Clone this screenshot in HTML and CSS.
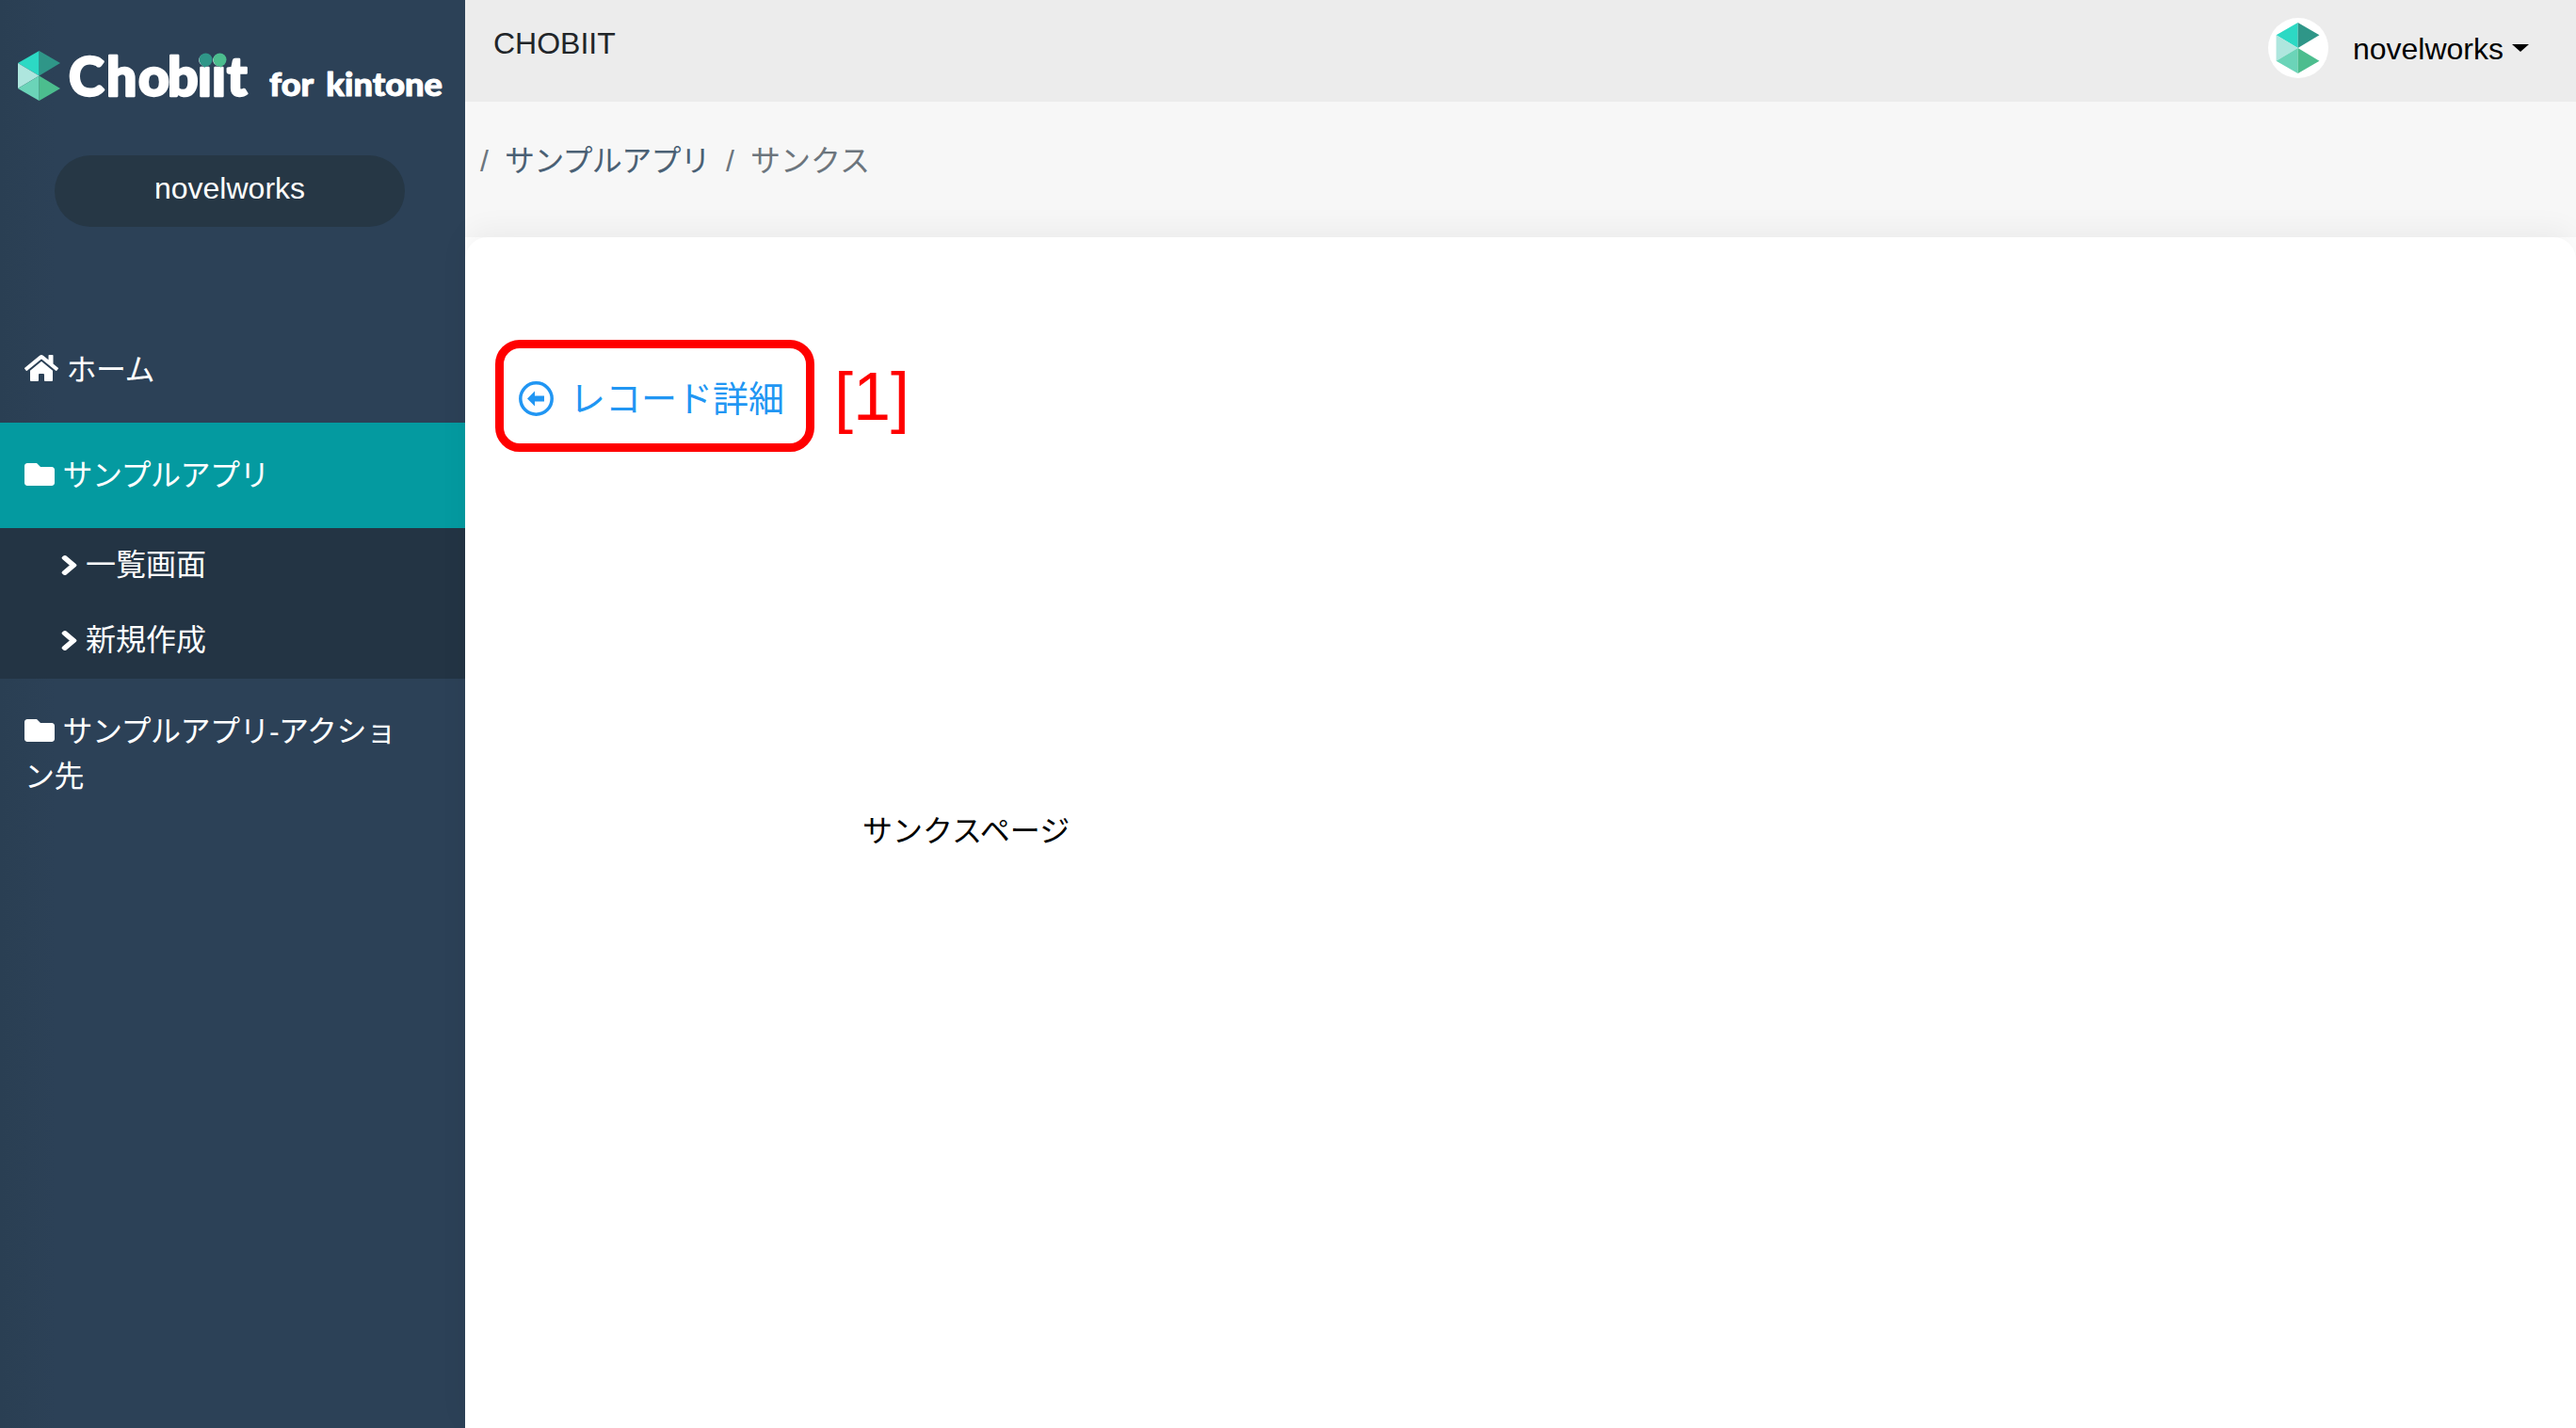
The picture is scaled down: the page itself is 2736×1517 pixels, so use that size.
FILE: index.html
```html
<!DOCTYPE html>
<html lang="ja">
<head>
<meta charset="utf-8">
<title>CHOBIIT</title>
<link rel="stylesheet" href="styles.css">
</head>
<body>
<div class="app">
  <aside class="sidebar">
    <svg class="logo" viewBox="0 0 494 165" width="494" height="165">
      <polygon points="19,67 41.6,54 41.6,80.5" fill="#2cd9c4"/>
      <polygon points="41.6,54 64,67 41.6,80.5" fill="#2f9688"/>
      <polygon points="19,67 41.6,80.5 19,94" fill="#aee6de"/>
      <polygon points="19,94 41.6,80.5 41.6,107" fill="#6bd4b8"/>
      <polygon points="41.6,80.5 64,94 41.6,107" fill="#4cbd8e"/>
      <text class="logo-main" x="73 113 147 178 210 225 241" y="102">Chobiit</text>
      <text class="logo-sub" x="286" y="102" textLength="184" lengthAdjust="spacingAndGlyphs">for kintone</text>
      <circle cx="218.500" cy="63.500" r="7" fill="#2f9688"/>
      <path d="M215 68l2 4 3-3z" fill="#2f9688"/>
      <circle cx="233.500" cy="63.500" r="7" fill="#4cbd8e"/>
      <path d="M232 69l3 3 1-4z" fill="#4cbd8e"/>
    </svg>
    <div class="tenant">novelworks</div>
    <nav class="nav">
      <a class="nav-item"><svg class="ic-home" viewBox="0 0 576 512"><path d="M280.37 148.26L96 300.11V464a16 16 0 0 0 16 16l112.06-.29a16 16 0 0 0 15.92-16V368a16 16 0 0 1 16-16h64a16 16 0 0 1 16 16v95.64a16 16 0 0 0 16 16.05L464 480a16 16 0 0 0 16-16V300L295.67 148.26a12.19 12.19 0 0 0-15.3 0zM571.6 251.47L488 182.56V44.05a12 12 0 0 0-12-12h-56a12 12 0 0 0-12 12v72.61L318.47 43a48 48 0 0 0-61 0L4.34 251.47a12 12 0 0 0-1.6 16.9l25.5 31A12 12 0 0 0 45.15 301l235.22-193.74a12.19 12.19 0 0 1 15.3 0L530.9 301a12 12 0 0 0 16.9-1.6l25.5-31a12 12 0 0 0-1.7-16.93z"/></svg> ホーム</a>
      <a class="nav-item active"><svg class="ic-folder" viewBox="0 0 512 512"><path d="M464 128H272l-64-64H48C21.49 64 0 85.49 0 112v288c0 26.51 21.49 48 48 48h416c26.51 0 48-21.49 48-48V176c0-26.51-21.49-48-48-48z"/></svg> サンプルアプリ</a>
      <div class="subnav">
        <a class="sub-item"><svg class="ic-chev" viewBox="0 0 320 512" preserveAspectRatio="none"><path d="M285.476 272.971L91.132 467.314c-9.373 9.373-24.569 9.373-33.941 0l-22.667-22.667c-9.357-9.357-9.375-24.522-.04-33.901L188.505 256 34.484 101.255c-9.335-9.379-9.317-24.544.04-33.901l22.667-22.667c9.373-9.373 24.569-9.373 33.941 0L285.475 239.03c9.373 9.372 9.373 24.568.001 33.941z"/></svg>一覧画面</a>
        <a class="sub-item"><svg class="ic-chev" viewBox="0 0 320 512" preserveAspectRatio="none"><path d="M285.476 272.971L91.132 467.314c-9.373 9.373-24.569 9.373-33.941 0l-22.667-22.667c-9.357-9.357-9.375-24.522-.04-33.901L188.505 256 34.484 101.255c-9.335-9.379-9.317-24.544.04-33.901l22.667-22.667c9.373-9.373 24.569-9.373 33.941 0L285.475 239.03c9.373 9.372 9.373 24.568.001 33.941z"/></svg>新規作成</a>
      </div>
      <a class="nav-item"><svg class="ic-folder" viewBox="0 0 512 512"><path d="M464 128H272l-64-64H48C21.49 64 0 85.49 0 112v288c0 26.51 21.49 48 48 48h416c26.51 0 48-21.49 48-48V176c0-26.51-21.49-48-48-48z"/></svg> サンプルアプリ-アクション先</a>
    </nav>
  </aside>
  <div class="content">
    <header class="topbar">
      <div class="brand">CHOBIIT</div>
      <div class="user">
        <span class="avatar">
          <svg viewBox="0 0 45 53" width="47" height="54">
            <polygon points="0,13 22.600,0 22.600,26.500" fill="#2cd9c4"/>
            <polygon points="22.600,0 45,13 22.600,26.500" fill="#2f9688"/>
            <polygon points="0,13 22.600,26.500 0,40" fill="#aee6de"/>
            <polygon points="0,40 22.600,26.500 22.600,53" fill="#6bd4b8"/>
            <polygon points="22.600,26.500 45,40 22.600,53" fill="#4cbd8e"/>
          </svg>
        </span>
        <span class="user-name">novelworks</span>
        <span class="caret"></span>
      </div>
    </header>
    <div class="crumbs">
      <span class="sep">/</span>
      <a class="crumb-link">サンプルアプリ</a>
      <span class="sep">/</span>
      <span class="crumb-current">サンクス</span>
    </div>
    <main class="card">
      <div class="back-row">
        <div class="callout">
          <a class="back-link">
            <svg class="ic-back" viewBox="0 0 37 37"><circle cx="18.500" cy="18.500" r="16.700" fill="none" stroke="#2196f3" stroke-width="3.500"/><path d="M9 18.500l8-8v5h10v6H17v5z" fill="#2196f3"/></svg>
            <span>レコード詳細</span>
          </a>
        </div>
        <span class="callout-num">[1]</span>
      </div>
      <p class="thanks">サンクスページ</p>
    </main>
  </div>
</div>
</body>
</html>
```
FILE: styles.css
```css
* { box-sizing: border-box; }
html, body { margin: 0; height: 100%; background: #fff; }
body {
  font-family: "Liberation Sans", "Noto Sans CJK JP", sans-serif;
  font-size: 32px;
  line-height: 48px;
  color: #000;
}
.app { display: flex; height: 1517px; overflow: hidden; }

.sidebar {
  flex: 0 0 494px;
  background: linear-gradient(90deg, #2a3f53 0%, #2c4157 12%, #2c4157 100%);
  color: #fff;
  display: flex;
  flex-direction: column;
  align-items: stretch;
}
.logo { display: block; flex: none; }
.logo-main {
  font-family: Lato, sans-serif;
  font-weight: 900;
  font-size: 57px;
  fill: #fff;
  stroke: #fff;
  stroke-width: 2.5px;
  stroke-linejoin: round;
}
.logo-sub {
  font-family: Lato, sans-serif;
  font-weight: 900;
  font-size: 34px;
  word-spacing: 5px;
  fill: #fff;
  stroke: #fff;
  stroke-width: 1px;
  stroke-linejoin: round;
}
.tenant {
  margin: 0 64px 0 58px;
  height: 76px;
  border-radius: 38px;
  background: #263745;
  text-align: center;
  line-height: 71px;
}
.nav { margin-top: 96px; display: flex; flex-direction: column; letter-spacing: -0.5px; }
.nav-item {
  display: block;
  padding: 32px 26px;
  padding-right: 60px;
}
.nav-item.active { background: #049aa0; }
.ic-home { width: 36px; height: 32px; fill: #fff; vertical-align: -3px; }
.ic-folder { width: 32px; height: 32px; fill: #fff; vertical-align: -4px; }
.subnav { background: #233444; letter-spacing: 0; }
.sub-item {
  display: block;
  height: 80px;
  padding: 15px 0 0 65px;
}
.ic-chev {
  width: 17px;
  height: 23px;
  fill: #fff;
  stroke: #fff;
  stroke-width: 34px;
  stroke-linejoin: round;
  overflow: visible;
  margin-right: 9px;
  vertical-align: -1px;
}

.content { flex: 1; min-width: 0; display: flex; flex-direction: column; }
.topbar {
  flex: 0 0 108px;
  background: #ececec;
  display: flex;
  justify-content: space-between;
  padding: 0 50px 6px 30px;
}
.brand { color: #212529; padding-top: 22px; }
.user { display: flex; align-items: center; }
.avatar {
  width: 64px;
  height: 64px;
  border-radius: 50%;
  background: #fff;
  display: flex;
  align-items: center;
  justify-content: center;
}
.user-name { margin-left: 26px; color: #000; position: relative; top: 1px; }
.caret {
  margin-left: 9px;
  width: 0;
  height: 0;
  border-left: 9px solid transparent;
  border-right: 9px solid transparent;
  border-top: 8px solid #000;
}
.crumbs {
  flex: 0 0 144px;
  background: #f7f7f7;
  display: flex;
  gap: 17px;
  padding: 39px 0 0 16px;
}
.sep, .crumb-current { color: #6c757d; }
.crumb-link { color: #4a6074; letter-spacing: -0.7px; }
.card {
  flex: 1;
  background: #fff;
  border-radius: 24px 24px 0 0;
  box-shadow: 0 -8px 30px rgba(0, 0, 0, 0.05);
  padding: 109px 0 0 32px;
}
.back-row { display: flex; align-items: center; gap: 21px; }
.callout {
  width: 339px;
  height: 119px;
  border: 9px solid #f00;
  border-radius: 26px;
  display: flex;
  align-items: center;
  padding: 6px 0 0 16px;
}
.back-link { display: flex; align-items: center; gap: 17px; color: #2196f3; font-size: 38px; }
.ic-back { width: 37px; height: 37px; flex: none; }
.callout-num { color: #f00; font-size: 72px; line-height: 1; }
.thanks { margin: 379px 0 0 390px; color: #000; }
```
